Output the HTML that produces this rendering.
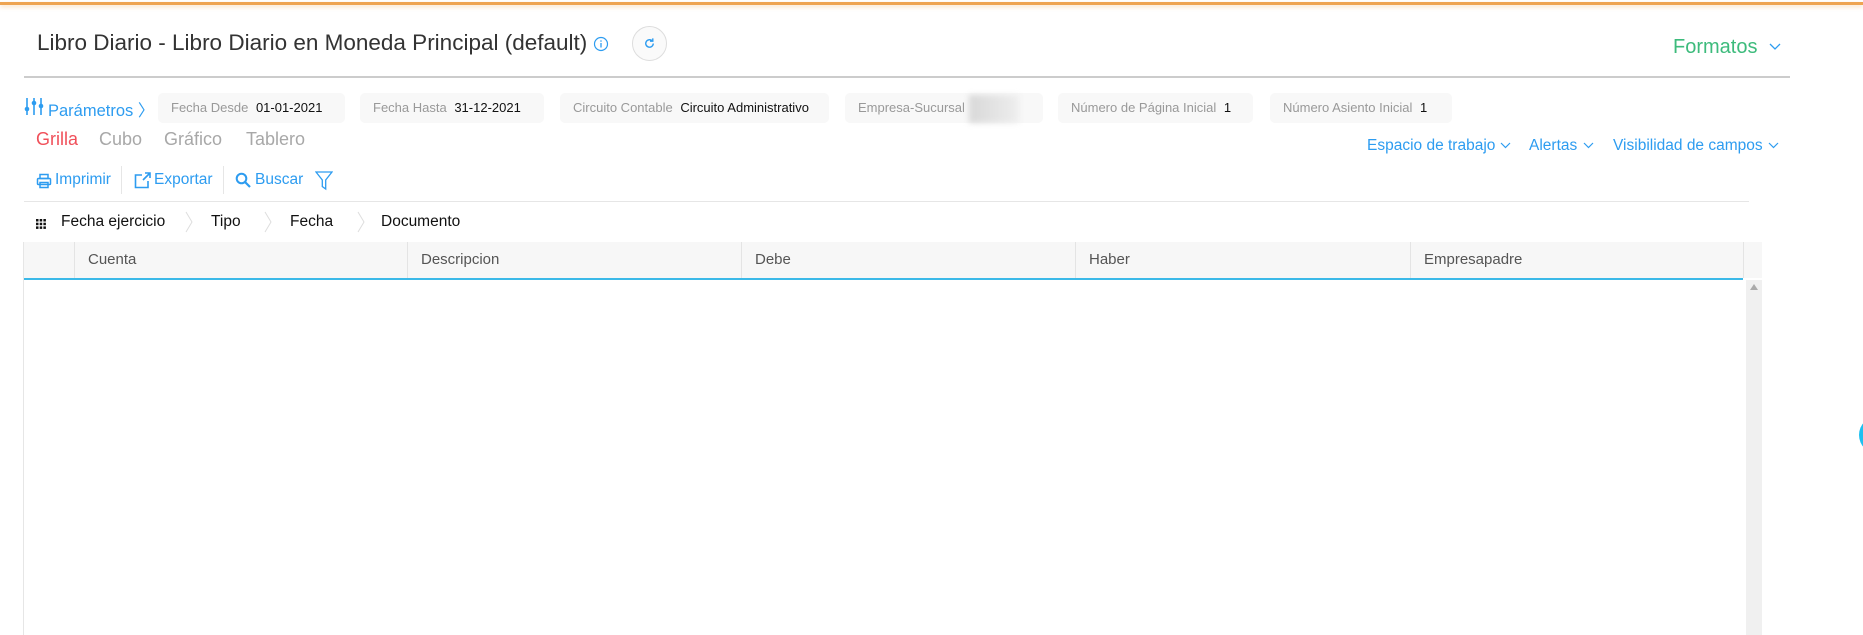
<!DOCTYPE html>
<html><head><meta charset="utf-8">
<style>
*{margin:0;padding:0;box-sizing:border-box}
body{width:1863px;height:635px;overflow:hidden;background:#fff;font-family:"Liberation Sans",sans-serif;position:relative}
.a{position:absolute;white-space:nowrap}
.blue{color:#2d9cf0}
.chip{position:absolute;top:93px;height:30px;background:#f8f8f8;border-radius:5px;font-size:13px;line-height:30px;padding-left:13px;color:#999}
.chip b{font-weight:normal;color:#111;margin-left:4px}
.tab{position:absolute;top:129px;font-size:18px;color:#a8a8a8}
.tl{position:absolute;top:171px;font-size:15.5px}
.bc{position:absolute;top:213px;font-size:15.5px;color:#111}
.chev{position:absolute;top:211px;width:8px;height:22px}
.th{position:absolute;top:242px;height:36px;line-height:36px;font-size:15px;color:#555;padding-left:13px;border-left:1px solid #e4e4e4}
</style></head><body>
<div class="a" style="left:0;top:2px;width:1863px;height:3px;background:#eea451;box-shadow:0 2px 4px rgba(238,164,81,.35)"></div>
<div class="a" style="left:37px;top:30px;font-size:22.5px;color:#333">Libro Diario - Libro Diario en Moneda Principal (default)</div>
<svg class="a" style="left:593px;top:36px" width="16" height="16" viewBox="0 0 16 16"><circle cx="8" cy="8" r="6.5" fill="none" stroke="#2d9cf0" stroke-width="1.2"/><line x1="8" y1="7" x2="8" y2="11.5" stroke="#2d9cf0" stroke-width="1.3"/><circle cx="8" cy="5" r=".8" fill="#2d9cf0"/></svg>
<div class="a" style="left:632px;top:26px;width:35px;height:35px;border:1px solid #ddd;border-radius:50%;background:#fafafa"></div>
<svg class="a" style="left:642px;top:36px" width="15" height="15" viewBox="0 0 16 16"><path d="M12 8a4 4 0 1 1-1.3-3" fill="none" stroke="#2d9cf0" stroke-width="1.5"/><path d="M11.5 2.5v3h-3" fill="none" stroke="#2d9cf0" stroke-width="1.5"/></svg>
<div class="a" style="left:1673px;top:36px;font-size:20px;color:#3dbb7c">Formatos</div>
<svg class="a" style="left:1769px;top:43px" width="12" height="8"><path d="M1 1l5 5 5-5" fill="none" stroke="#2d9cf0" stroke-width="1.3"/></svg>
<div class="a" style="left:24px;top:76px;width:1766px;height:2px;background:#ccc"></div>

<svg class="a" style="left:24px;top:97px" width="20" height="19" viewBox="0 0 20 19"><g stroke="#2d9cf0" stroke-width="1.6"><line x1="3" y1="1" x2="3" y2="18"/><line x1="10" y1="1" x2="10" y2="18"/><line x1="17" y1="1" x2="17" y2="18"/></g><g fill="#2d9cf0"><circle cx="3" cy="12" r="2.3"/><circle cx="10" cy="6" r="2.3"/><circle cx="17" cy="9" r="2.3"/></g></svg>
<div class="a blue" style="left:48px;top:97px;font-size:16.5px">Parámetros 〉</div>
<div class="chip" style="left:158px;width:187px">Fecha Desde <b>01-01-2021</b></div>
<div class="chip" style="left:360px;width:184px">Fecha Hasta <b>31-12-2021</b></div>
<div class="chip" style="left:560px;width:269px">Circuito Contable <b>Circuito Administrativo</b></div>
<div class="chip" style="left:845px;width:198px">Empresa-Sucursal <span style="display:inline-block;vertical-align:middle;width:50px;height:28px;background:linear-gradient(90deg,#d8d8d8,#eee);filter:blur(3px)"></span></div>
<div class="chip" style="left:1058px;width:195px">Número de Página Inicial <b>1</b></div>
<div class="chip" style="left:1270px;width:182px">Número Asiento Inicial <b>1</b></div>

<div class="tab" style="left:36px;color:#f0505a">Grilla</div>
<div class="tab" style="left:99px">Cubo</div>
<div class="tab" style="left:164px">Gráfico</div>
<div class="tab" style="left:246px">Tablero</div>

<div class="a blue" style="left:1367px;top:137px;font-size:15.5px">Espacio de trabajo</div>
<svg class="a" style="left:1500px;top:142px" width="11" height="8"><path d="M1 1l4.5 4.5L10 1" fill="none" stroke="#2d9cf0" stroke-width="1.2"/></svg>
<div class="a blue" style="left:1529px;top:137px;font-size:15.5px">Alertas</div>
<svg class="a" style="left:1583px;top:142px" width="11" height="8"><path d="M1 1l4.5 4.5L10 1" fill="none" stroke="#2d9cf0" stroke-width="1.2"/></svg>
<div class="a blue" style="left:1613px;top:137px;font-size:15.5px">Visibilidad de campos</div>
<svg class="a" style="left:1768px;top:142px" width="11" height="8"><path d="M1 1l4.5 4.5L10 1" fill="none" stroke="#2d9cf0" stroke-width="1.2"/></svg>

<svg class="a" style="left:36px;top:173px" width="16" height="16" viewBox="0 0 16 16"><g fill="none" stroke="#2d9cf0" stroke-width="1.5"><rect x="4" y="1.5" width="8" height="4"/><rect x="1.5" y="5.5" width="13" height="6" rx="1"/><rect x="4" y="9.5" width="8" height="5"/></g></svg>
<div class="tl blue" style="left:55px">Imprimir</div>
<div class="a" style="left:121px;top:166px;width:1px;height:28px;background:#e6e6e6"></div>
<svg class="a" style="left:134px;top:172px" width="18" height="17" viewBox="0 0 18 17"><g fill="none" stroke="#2d9cf0" stroke-width="1.6"><path d="M8 3H1.5v12.5H14V9"/><path d="M9 8l7-7M11 1h5v5"/></g></svg>
<div class="tl blue" style="left:154px">Exportar</div>
<div class="a" style="left:223px;top:166px;width:1px;height:28px;background:#e6e6e6"></div>
<svg class="a" style="left:235px;top:172px" width="16" height="16" viewBox="0 0 16 16"><circle cx="6.5" cy="6.5" r="4.8" fill="none" stroke="#2d9cf0" stroke-width="2"/><line x1="10" y1="10" x2="15" y2="15" stroke="#2d9cf0" stroke-width="2.2"/></svg>
<div class="tl blue" style="left:255px">Buscar</div>
<svg class="a" style="left:315px;top:171px" width="18" height="20" viewBox="0 0 18 20"><path d="M1 1h16l-6.3 8v9l-3.4-2.5V9z" fill="none" stroke="#2d9cf0" stroke-width="1.3"/></svg>
<div class="a" style="left:24px;top:201px;width:1725px;height:1px;background:#e6e6e6"></div>

<svg class="a" style="left:36px;top:219px" width="10" height="10"><g fill="#111"><rect x="0" y="0" width="2.5" height="2.5"/><rect x="3.7" y="0" width="2.5" height="2.5"/><rect x="7.4" y="0" width="2.5" height="2.5"/><rect x="0" y="3.7" width="2.5" height="2.5"/><rect x="3.7" y="3.7" width="2.5" height="2.5"/><rect x="7.4" y="3.7" width="2.5" height="2.5"/><rect x="0" y="7.4" width="2.5" height="2.5"/><rect x="3.7" y="7.4" width="2.5" height="2.5"/><rect x="7.4" y="7.4" width="2.5" height="2.5"/></g></svg>
<div class="bc" style="left:61px">Fecha ejercicio</div>
<svg class="chev" style="left:185px"><path d="M1 1l6 10-6 10" fill="none" stroke="#ddd"/></svg>
<div class="bc" style="left:211px">Tipo</div>
<svg class="chev" style="left:264px"><path d="M1 1l6 10-6 10" fill="none" stroke="#ddd"/></svg>
<div class="bc" style="left:290px">Fecha</div>
<svg class="chev" style="left:357px"><path d="M1 1l6 10-6 10" fill="none" stroke="#ddd"/></svg>
<div class="bc" style="left:381px">Documento</div>

<div class="a" style="left:24px;top:242px;width:1719px;height:36px;background:#f7f7f7"></div>
<div class="a" style="left:1743px;top:242px;width:19px;height:36px;background:#f7f7f7;border-left:1px solid #e4e4e4"></div>
<div class="th" style="left:74px;width:333px">Cuenta</div>
<div class="th" style="left:407px;width:334px">Descripcion</div>
<div class="th" style="left:741px;width:334px">Debe</div>
<div class="th" style="left:1075px;width:335px">Haber</div>
<div class="th" style="left:1410px;width:333px">Empresapadre</div>
<div class="a" style="left:24px;top:278px;width:1719px;height:2px;background:#3bb9e8"></div>
<div class="a" style="left:23px;top:242px;width:1px;height:393px;background:#e6e6e6"></div>
<div class="a" style="left:1746px;top:280px;width:16px;height:355px;background:#f0f0f0"></div>
<svg class="a" style="left:1750px;top:284px" width="8" height="6"><path d="M4 0l4 6H0z" fill="#aaa"/></svg>
<div class="a" style="left:1859px;top:416px;width:38px;height:38px;border-radius:50%;background:#1ec0f0"></div>
</body></html>
